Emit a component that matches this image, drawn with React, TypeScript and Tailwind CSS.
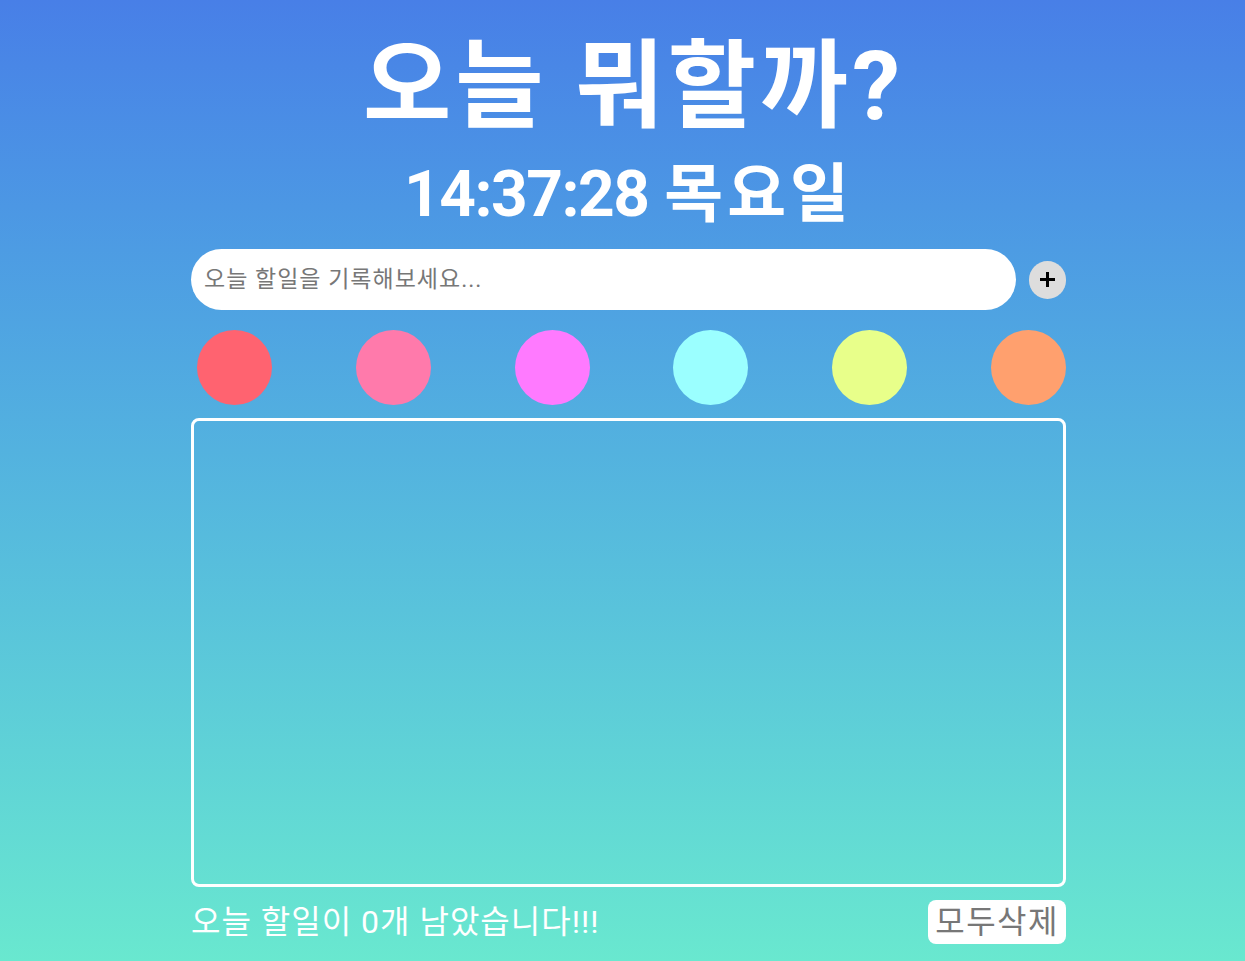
import React from "react";

const colors = ["bg-[#ff6370]", "bg-[#ff7aab]", "bg-[#ff7aff]", "bg-[#9bffff]", "bg-[#e8ff8a]", "bg-[#ffa06e]"];

export default function App() {
  return (
    <div
      className="w-full h-[961px] overflow-hidden bg-gradient-to-b from-[#487fe7] to-[#69e8cf]"
      style={{ fontFamily: 'Roboto, "Noto Sans CJK KR", sans-serif' }}
    >
      <div className="mx-auto w-[887px] pl-[12px] flex flex-col">
        <h1 className="text-center text-white font-bold text-[96px] leading-none tracking-[4px] mt-[38px] h-[110px] pl-[10px]">
          오늘 뭐할까?
        </h1>
        <div className="text-center text-white font-bold text-[64px] leading-none mt-[15px] h-[75px] pl-[0px]">
          <span className="tracking-[-1.5px]">14:37:28</span> <span className="tracking-[4px]">목요일</span>
        </div>
        <div className="flex items-center gap-[13px] mt-[11px]">
          <input
            className="flex-1 h-[61px] rounded-full bg-white px-[13px] text-[23px] tracking-[1px] text-gray-700 placeholder:text-[#777] outline-none"
            placeholder="오늘 할일을 기록해보세요..."
          />
          <button className="w-[37px] h-[38px] rounded-full bg-[#dddddd] flex items-center justify-center">
            <svg width="17" height="17" viewBox="0 0 17 17">
              <path d="M8.5 1v15M1 8.5h15" stroke="black" strokeWidth="3" />
            </svg>
          </button>
        </div>
        <div className="flex justify-between mt-[20px] pl-[6px]">
          {colors.map((c) => (
            <div key={c} className={`w-[75px] h-[75px] rounded-full ${c}`} />
          ))}
        </div>
        <div className="mt-[13px] h-[469px] border-[3px] border-white rounded-[8px]" />
        <div className="flex items-center justify-between mt-[13px]">
          <span className="text-white text-[32px] font-normal tracking-[1px] leading-none">오늘 할일이 0개 남았습니다!!!</span>
          <button className="bg-white rounded-[8px] h-[44px] px-[7px] text-[32px] font-normal tracking-[1.5px] leading-none text-[#777]">
            모두삭제
          </button>
        </div>
      </div>
    </div>
  );
}
